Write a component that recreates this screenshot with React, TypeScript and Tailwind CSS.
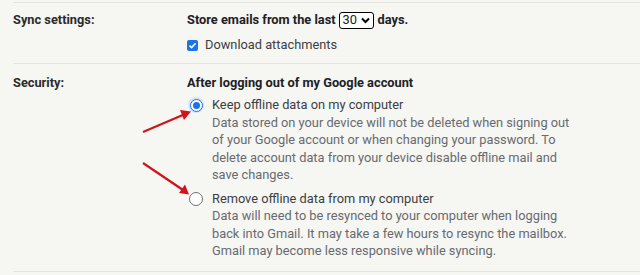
import React from "react";

function Radio({ checked }: { checked: boolean }) {
  if (checked) {
    return (
      <span className="flex h-[16px] w-[16px] items-center justify-center rounded-full bg-[#d6e4fb]">
        <span className="flex h-[13px] w-[13px] items-center justify-center rounded-full border-[1.5px] border-[#1a73e8] bg-white">
          <span className="h-[7px] w-[7px] rounded-full bg-[#1a73e8]" />
        </span>
      </span>
    );
  }
  return (
    <span className="flex h-[16px] w-[16px] items-center justify-center">
      <span className="h-[14px] w-[14px] rounded-full border border-[#6f6f6f] bg-white" />
    </span>
  );
}

export default function App() {
  return (
    <div
      className="relative h-[275px] w-[640px] overflow-hidden bg-[#f6f6f3] text-[12.8px] text-[#202124]"
      style={{ fontFamily: "Roboto, 'Liberation Sans', sans-serif" }}
    >
      <div className="pl-[13px] pt-[2px]">
        {/* Sync settings */}
        <div className="flex border-t border-[#e4e4e1] pt-[7px] pb-[8px]">
          <div className="w-[174px] shrink-0 font-bold leading-[20px] text-[#2b2b2b]">Sync settings:</div>
          <div className="flex flex-col">
            <div className="flex h-[20px] items-center font-bold text-[#202124]">
              <span>Store emails from the last</span>
              <span className="ml-[3px] mr-[4px] flex h-[17px] w-[35px] items-center justify-between rounded-[3px] border-[1.5px] border-black bg-white pl-[3px] pr-[3px] font-normal">
                <span className="leading-none">30</span>
                <svg width="9" height="7" viewBox="0 0 9 7">
                  <path d="M1 1.5 L4.5 5 L8 1.5" fill="none" stroke="#000" strokeWidth="2" />
                </svg>
              </span>
              <span>days.</span>
            </div>
            <div className="mt-[5px] flex h-[20px] items-center">
              <span className="flex h-[11px] w-[11px] items-center justify-center rounded-[2px] bg-[#1a73e8]">
                <svg width="9" height="9" viewBox="0 0 9 9">
                  <path d="M1.5 4.6 L3.6 6.6 L7.6 2.2" fill="none" stroke="#fff" strokeWidth="1.6" />
                </svg>
              </span>
              <span className="ml-[7px] text-[#3c4043]">Download attachments</span>
            </div>
          </div>
        </div>

        {/* Security */}
        <div className="flex border-t border-b border-[#e4e4e1] pt-[9px] pb-[11px]">
          <div className="w-[174px] shrink-0 font-bold leading-[20px] text-[#2b2b2b]">Security:</div>
          <div className="flex flex-col">
            <div className="h-[20px] font-bold leading-[20px]">After logging out of my Google account</div>
            <div className="mt-[3px] flex">
              <div className="w-[25px] shrink-0 pl-[1px] pt-[1px]">
                <Radio checked />
              </div>
              <div className="whitespace-nowrap leading-[17.5px]">
                <div className="text-[#3c4043]">Keep offline data on my computer</div>
                <div className="text-[#676b70]">
                  <div>Data stored on your device will not be deleted when signing out</div>
                  <div>of your Google account or when changing your password. To</div>
                  <div>delete account data from your device disable offline mail and</div>
                  <div>save changes.</div>
                </div>
              </div>
            </div>
            <div className="mt-[6px] flex">
              <div className="w-[25px] shrink-0 pl-[1px] pt-[1px]">
                <Radio checked={false} />
              </div>
              <div className="whitespace-nowrap leading-[17.5px]">
                <div className="text-[#3c4043]">Remove offline data from my computer</div>
                <div className="text-[#676b70]">
                  <div>Data will need to be resynced to your computer when logging</div>
                  <div>back into Gmail. It may take a few hours to resync the mailbox.</div>
                  <div>Gmail may become less responsive while syncing.</div>
                </div>
              </div>
            </div>
          </div>
        </div>
      </div>

      {/* annotation arrows */}
      <svg className="pointer-events-none absolute left-0 top-0" width="640" height="275">
        <line x1="143" y1="132" x2="184" y2="114.5" stroke="#d0141c" strokeWidth="2.2" />
        <polygon points="191,111.5 180,110 184,120" fill="#d0141c" />
        <line x1="143" y1="163" x2="183" y2="190" stroke="#d0141c" strokeWidth="2.2" />
        <polygon points="189,194.5 179,193 185,184.5" fill="#d0141c" />
      </svg>
    </div>
  );
}
